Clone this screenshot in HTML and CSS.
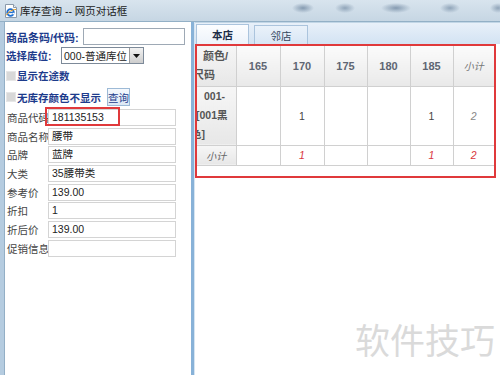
FILE: index.html
```html
<!DOCTYPE html>
<html lang="zh-CN">
<head>
<meta charset="utf-8">
<title>库存查询</title>
<link rel="stylesheet" href="styles.css">
</head>
<body>
<div class="titlebar">
  <svg class="ie" width="16" height="16" viewBox="0 0 16 16">
    <path d="M2.5 1.5h8l3 3v10h-11z" fill="#fff" stroke="#8a9aab" stroke-width="1"/>
    <path d="M10.5 1.5v3h3" fill="#e8eef4" stroke="#8a9aab" stroke-width="1"/>
    <circle cx="7.5" cy="9.5" r="3.3" fill="none" stroke="#1e6fd0" stroke-width="1.8"/>
    <path d="M4.6 9.4h5.9" stroke="#1e6fd0" stroke-width="1.4"/>
    <path d="M9.6 10.6h2" stroke="#fff" stroke-width="1.6"/>
    <path d="M3 12.5c2-3.5 7-6.5 10-6" fill="none" stroke="#f0a020" stroke-width="1"/>
  </svg>
  <span class="title">库存查询 -- 网页对话框</span>
</div>
<div class="window">
  <div class="left">
    <div class="row r1"><span class="lbl">商品条码/代码:</span><span class="inp"></span></div>
    <div class="row r2"><span class="lbl">选择库位:</span><span class="select"><span class="sel-text">000-普通库位</span><span class="sel-btn"><svg width="7" height="4" viewBox="0 0 7 4"><path d="M0 0h7L3.5 4z" fill="#111"/></svg></span></span></div>
    <div class="row r3"><span class="chk"></span><span class="lbl">显示在途数</span></div>
    <div class="row r4"><span class="chk"></span><span class="lbl">无库存颜色不显示</span><span class="btn">查询</span></div>
    <div class="form">
      <span class="flbl">商品代码</span><span class="finp">181135153</span>
      <span class="flbl">商品名称</span><span class="finp">腰带</span>
      <span class="flbl">品牌</span><span class="finp">蓝牌</span>
      <span class="flbl">大类</span><span class="finp">35腰带类</span>
      <span class="flbl">参考价</span><span class="finp">139.00</span>
      <span class="flbl">折扣</span><span class="finp">1</span>
      <span class="flbl">折后价</span><span class="finp">139.00</span>
      <span class="flbl">促销信息</span><span class="finp"></span>
      <span class="annot"></span>
    </div>
  </div>
  <div class="divider"></div>
  <div class="right">
    <div class="tabs"><span class="tab active">本店</span><span class="tab">邻店</span></div>
    <div class="redbox">
      <table class="grid">
        <colgroup><col class="c0"><col class="c1"><col class="c1"><col class="c2"><col class="c2"><col class="c2"><col class="c3"></colgroup>
        <tr class="hrow">
          <td class="side"><div class="ln l1">颜色/</div><div class="ln l2">尺码</div></td>
          <td>165</td><td>170</td><td>175</td><td>180</td><td>185</td><td class="sub">小计</td>
        </tr>
        <tr class="drow">
          <td class="side"><div class="ln d1">001-</div><div class="ln d2">[001黑</div><div class="ln d3">色]</div></td>
          <td></td><td>1</td><td></td><td></td><td>1</td><td class="tot">2</td>
        </tr>
        <tr class="srow">
          <td class="side subl">小计</td>
          <td></td><td class="red">1</td><td></td><td></td><td class="red">1</td><td class="red">2</td>
        </tr>
      </table>
    </div>
    <div class="watermark">软件技巧</div>
  </div>
</div>
</body>
</html>
```
FILE: styles.css
```css
* { box-sizing: border-box; margin: 0; padding: 0; }
html, body { width: 500px; height: 375px; overflow: hidden; background: #fff; }
body { font-family: "Liberation Sans", "Noto Sans CJK SC", sans-serif; font-size: 10.5px; color: #333; }

.titlebar {
  height: 22px;
  display: flex;
  align-items: center;
  padding-left: 3px;
  gap: 1px;
  border-bottom: 1px solid #93b0c6;
  background:
    radial-gradient(ellipse 11px 5px at 303px 8px, rgba(100,125,152,.7), rgba(100,125,152,0)),
    radial-gradient(ellipse 10px 5px at 345px 8px, rgba(100,125,152,.6), rgba(100,125,152,0)),
    radial-gradient(ellipse 15px 5px at 396px 8px, rgba(100,125,152,.7), rgba(100,125,152,0)),
    radial-gradient(ellipse 10px 5px at 450px 8px, rgba(100,125,152,.6), rgba(100,125,152,0)),
    radial-gradient(ellipse 8px 5px at 498px 8px, rgba(100,125,152,.6), rgba(100,125,152,0)),
    linear-gradient(#d8e4ee, #c6d6e3);
}
.ie { flex: none; }
.title { color: #1a1a1a; font-size: 10.5px; }

.window { display: flex; height: 353px; }

.left {
  width: 191px;
  flex: none;
  border-left: 4px solid #b5cce0;
  box-shadow: inset 1px 0 0 #93afc6;
  padding-left: 2px;
  display: flex;
  flex-direction: column;
}
.row { display: flex; align-items: center; }
.r1 { margin-top: 6px; height: 17px; padding-right: 6px; }
.r2 { margin-top: 2px; height: 17px; }
.r3 { margin-top: 3px; height: 17px; }
.r4 { margin-top: 4px; height: 18px; }

.lbl { font-weight: bold; color: #1d3b8c; white-space: nowrap; }
.r1 .lbl { font-size: 11px; }
.inp { margin-left: auto; width: 102px; height: 17px; border: 1px solid #9ea9b5; background: #fff; }
.r2 .lbl { width: 55px; }
.select { width: 83px; height: 17px; border: 1px solid #7d8a99; display: flex; align-items: center; background: #fff; }
.sel-text { flex: 1; padding-left: 2px; color: #222; white-space: nowrap; overflow: hidden; }
.sel-btn { width: 14px; height: 15px; border-left: 1px solid #9a9a9a; background: linear-gradient(#f2f2f2, #cdcdcd); display: flex; align-items: center; justify-content: center; }
.chk { width: 10px; height: 10px; background: #d8d8d8; border: 1px solid #e6e6e6; margin-right: 1px; flex: none; }
.btn { margin-left: 6px; width: 23px; height: 18px; border: 1px solid #9dbad6; background: linear-gradient(#f6f9fd, #dce8f5); color: #1d3b8c; display: flex; align-items: center; justify-content: center; }

.form {
  margin-top: 2px;
  padding-left: 1px;
  display: grid;
  grid-template-columns: 41px 128px;
  grid-auto-rows: 18.7px;
  align-items: center;
  position: relative;
}
.flbl { color: #444; white-space: nowrap; }
.finp { height: 17px; border: 1px solid #d4d4d4; padding-left: 3px; line-height: 15px; color: #222; background: #fff; }
.annot { position: absolute; left: 39px; top: -1px; width: 75px; height: 19px; border: 2px solid #e0393b; }

.divider { width: 4px; flex: none; background: #88b2d8; border-right: 1px solid #d6e5f2; }

.right { flex: 1; position: relative; display: flex; flex-direction: column; }
.tabs {
  height: 22px;
  display: flex;
  align-items: flex-end;
  padding-left: 1px;
  gap: 5px;
  border-top: 1px solid #c2d6e6;
  background: linear-gradient(#e8f0f9, #d3e3f3);
}
.tab {
  width: 54px;
  height: 19px;
  display: flex;
  align-items: center;
  justify-content: center;
  border: 1px solid #abc4dd;
  border-bottom: none;
  background: linear-gradient(#eaf2fa, #d8e6f5);
  color: #34475e;
}
.tab.active { width: 53px; height: 20px; background: linear-gradient(#fcfdff, #edf3fa); font-weight: bold; color: #1e2e48; }

.redbox { margin-left: 0; width: 301px; height: 134px; border: 2px solid #e0393b; background: #fff; }
.grid { width: 297px; border-collapse: collapse; table-layout: fixed; }
.c0 { width: 39px; }
.c1 { width: 44px; }
.c2 { width: 43px; }
.c3 { width: 41px; }
.grid td { border: 1px solid #d0d0d0; padding: 0; text-align: center; overflow: hidden; color: #444; }
.grid tr:first-child td { border-top: none; }
.grid td:first-child { border-left: none; }
.grid td:last-child { border-right: none; }
.hrow { height: 40px; }
.hrow td { background: linear-gradient(#fbfbfb, #e9e9e9); font-weight: bold; color: #5f6673; font-size: 11px; }
.hrow td.sub { font-weight: normal; font-style: italic; color: #777; font-size: 10px; }
.drow { height: 59px; }
.srow { height: 20px; }
.grid td.side { background: linear-gradient(#f6f6f6, #e7e7e7); color: #555; font-weight: bold; text-align: left; white-space: nowrap; }
.ln { line-height: 19px; }
.l1 { padding-left: 6px; }
.l2 { margin-left: -4px; }
.d1 { padding-left: 7px; }
.d2 { margin-left: -1px; }
.d3 { margin-left: -6px; }
.grid td.subl { text-align: center; font-weight: normal; font-style: italic; color: #666; font-size: 10px; }
.grid td.tot { font-style: italic; color: #888; }
.grid td.red { font-style: italic; color: #d9363e; }

.watermark {
  position: absolute;
  right: 5px;
  top: 299px;
  font-family: "Noto Sans CJK SC", sans-serif;
  font-size: 35px;
  line-height: 1;
  color: #dadada;
}
```
